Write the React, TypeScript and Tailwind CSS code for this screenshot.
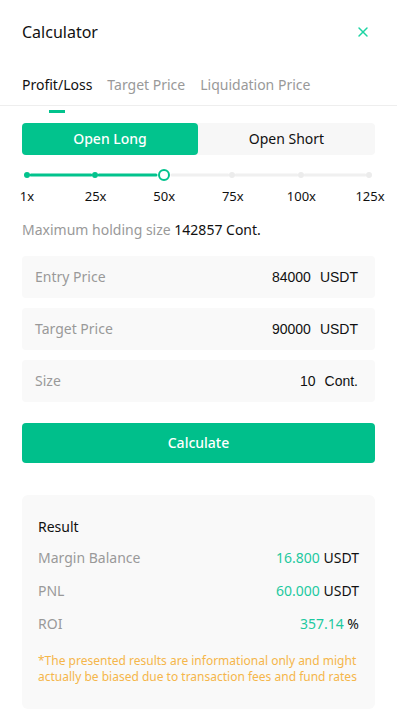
import { X } from 'lucide-react';

const font = { fontFamily: '"Noto Sans", "Open Sans", sans-serif' };

function Slider() {
    const xs = [5, 73, 142, 210, 279, 347];
    return (
        <svg width="352" height="14" viewBox="0 0 352 14" className="block">
            {xs.slice(0, -1).map((x, i) => (
                <line
                    key={i}
                    x1={x + (i === 2 ? 8 : 4)}
                    x2={xs[i + 1] - (i === 1 ? 8 : 4)}
                    y1="7"
                    y2="7"
                    stroke={i < 2 ? '#02c38d' : '#f0f0f0'}
                    strokeWidth="3"
                    strokeLinecap="round"
                />
            ))}
            {xs.map((x, i) =>
                i === 2 ? (
                    <circle key={i} cx={x} cy="7" r="5" fill="#fff" stroke="#02c38d" strokeWidth="2" />
                ) : (
                    <circle key={i} cx={x} cy="7" r="3" fill={i < 2 ? '#02c38d' : '#ececec'} />
                ),
            )}
        </svg>
    );
}

function InputRow({ label, value, unit }: { label: string; value: string; unit: string }) {
    return (
        <div className="flex h-[42px] items-center justify-between rounded bg-[#f9f9f9] pl-[13px] pr-[17px]">
            <span className="text-sm text-[#999]">{label}</span>
            <span className="flex items-center gap-[9px] text-sm text-[#111]" style={{ fontFamily: '"Liberation Sans", Arial, sans-serif' }}>
                <span>{value}</span>
                <span>{unit}</span>
            </span>
        </div>
    );
}

function ResultRow({ label, value, unit }: { label: string; value: string; unit: string }) {
    return (
        <div className="flex h-[33px] items-center justify-between text-sm">
            <span className="text-[#999]">{label}</span>
            <span>
                <span className="text-[#1dc9a0]">{value}</span> <span className="text-[#111]">{unit}</span>
            </span>
        </div>
    );
}

export default function App() {
    const labels = ['1x', '25x', '50x', '75x', '100x', '125x'];
    return (
        <div className="min-h-[716px] w-[397px] bg-white text-[#111]" style={font}>
            <div className="flex h-[64px] items-center justify-between pl-[22px] pr-[26px]">
                <h1 className="text-base">Calculator</h1>
                <X size={16} strokeWidth={2.2} className="text-[#1dd4a3]" />
            </div>
            <div className="flex h-[42px] items-center gap-[15px] border-b border-[#eeeeee] px-[22px] text-sm">
                <span className="text-[#111]">Profit/Loss</span>
                <span className="text-[#999]">Target Price</span>
                <span className="text-[#999]">Liquidation Price</span>
            </div>
            <div className="ml-[49px] mt-[4px] h-[3px] w-4 bg-[#02c38d]" />

            <div className="px-[22px]">
                <div className="mt-[10px] flex h-8 rounded bg-[#f7f7f7] text-sm">
                    <button className="w-[176px] rounded bg-[#02c38d] font-medium text-white">Open Long</button>
                    <button className="flex-1 text-[#111]">Open Short</button>
                </div>

                <div className="mt-[13px]">
                    <Slider />
                </div>
                <div className="mt-[5px] flex justify-between text-[13px] text-[#111]">
                    {labels.map((l) => (
                        <span key={l} className="flex w-[10px] justify-center whitespace-nowrap">
                            {l}
                        </span>
                    ))}
                </div>

                <p className="mt-[13px] text-sm text-[#999]">
                    Maximum holding size <span className="text-[#111]">142857 Cont.</span>
                </p>

                <div className="mt-[16px] flex flex-col gap-[10px]">
                    <InputRow label="Entry Price" value="84000" unit="USDT" />
                    <InputRow label="Target Price" value="90000" unit="USDT" />
                    <InputRow label="Size" value="10" unit="Cont." />
                </div>

                <button className="mt-[21px] h-10 w-full rounded bg-[#00bf8b] text-sm font-medium text-white">
                    Calculate
                </button>

                <div className="mt-[32px] rounded-md bg-[#f9f9f9] px-4 pb-[24px] pt-[22px]">
                    <div className="text-sm text-[#111]">Result</div>
                    <div className="mt-[5px]">
                        <ResultRow label="Margin Balance" value="16.800" unit="USDT" />
                        <ResultRow label="PNL" value="60.000" unit="USDT" />
                        <ResultRow label="ROI" value="357.14" unit="%" />
                    </div>
                    <p className="mt-[12px] text-xs leading-4 text-[#f5b64a]">
                        *The presented results are informational only and might actually be biased due to transaction fees and fund rates
                    </p>
                </div>
            </div>
        </div>
    );
}
